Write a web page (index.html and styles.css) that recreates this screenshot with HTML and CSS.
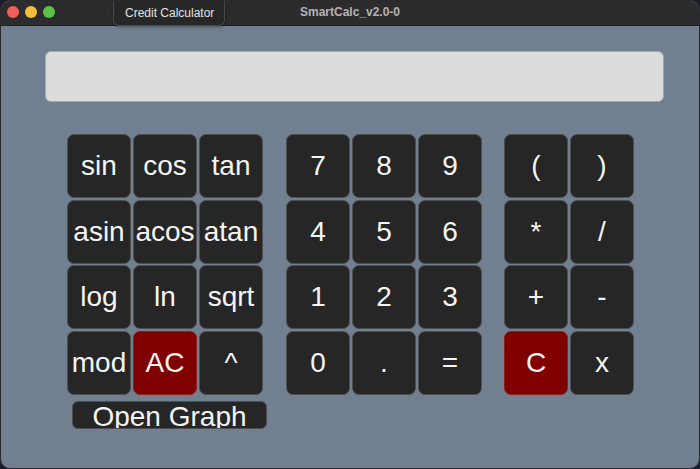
FILE: index.html
```html
<!DOCTYPE html>
<html>
<head>
<meta charset="utf-8">
<link rel="stylesheet" href="styles.css">
</head>
<body>
<div class="window">
  <div class="titlebar">
    <div class="lights">
      <span class="light red"></span>
      <span class="light yellow"></span>
      <span class="light green"></span>
    </div>
    <div class="title">SmartCalc_v2.0-0</div>
    <div class="tooltip">Credit Calculator</div>
  </div>
  <div class="content">
    <div class="display"></div>
    <div class="pads">
      <div class="col-left">
        <div class="grid g3">
          <button class="key">sin</button>
          <button class="key">cos</button>
          <button class="key">tan</button>
          <button class="key">asin</button>
          <button class="key">acos</button>
          <button class="key">atan</button>
          <button class="key">log</button>
          <button class="key">ln</button>
          <button class="key">sqrt</button>
          <button class="key">mod</button>
          <button class="key red-key">AC</button>
          <button class="key">^</button>
        </div>
        <button class="graph">Open Graph</button>
      </div>
      <div class="grid g3">
        <button class="key">7</button>
        <button class="key">8</button>
        <button class="key">9</button>
        <button class="key">4</button>
        <button class="key">5</button>
        <button class="key">6</button>
        <button class="key">1</button>
        <button class="key">2</button>
        <button class="key">3</button>
        <button class="key">0</button>
        <button class="key">.</button>
        <button class="key">=</button>
      </div>
      <div class="grid g2">
        <button class="key">(</button>
        <button class="key">)</button>
        <button class="key">*</button>
        <button class="key">/</button>
        <button class="key">+</button>
        <button class="key">-</button>
        <button class="key red-key">C</button>
        <button class="key">x</button>
      </div>
    </div>
  </div>
</div>
</body>
</html>
```
FILE: styles.css
```css
html, body {
  margin: 0;
  padding: 0;
  width: 700px;
  height: 469px;
  overflow: hidden;
  background: #1b1c2c;
}
body {
  font-family: "Liberation Sans", Arial, sans-serif;
}
.window {
  width: 700px;
  height: 469px;
  box-sizing: border-box;
  border-radius: 10px;
  overflow: hidden;
  background: #718090;
  border: 1px solid #2a2a2c;
  display: flex;
  flex-direction: column;
}
.titlebar {
  height: 24px;
  flex: none;
  background: #2c2c2e;
  border-bottom: 1px solid #1e1e1e;
  position: relative;
  display: flex;
  align-items: center;
  justify-content: center;
}
.lights {
  position: absolute;
  left: 6px;
  top: 5px;
  display: flex;
  gap: 6px;
}
.light {
  width: 12px;
  height: 12px;
  border-radius: 50%;
  display: block;
}
.red { background: #ed5f57; }
.yellow { background: #f5bd3c; }
.green { background: #5ac346; }
.title {
  color: #b3b3b3;
  font-weight: bold;
  font-size: 12px;
  margin-top: -2px;
}
.tooltip {
  position: absolute;
  left: 112px;
  top: -1px;
  width: 112px;
  height: 26px;
  box-sizing: border-box;
  background: #272728;
  border: 1px solid #4a4a4c;
  border-top: none;
  border-radius: 0 0 6px 6px;
  color: #e2e2e2;
  font-size: 12px;
  padding-left: 11px;
  line-height: 26px;
  box-shadow: 0 1px 3px rgba(0,0,0,0.4);
}
.content {
  flex: 1;
  padding: 25px 0 0 44px;
}
.display {
  width: 619px;
  height: 51px;
  box-sizing: border-box;
  background: #dcdcdc;
  border: 1px solid #a8a8a8;
  border-radius: 6px;
}
.pads {
  display: flex;
  align-items: flex-start;
  gap: 22px;
  margin-top: 32px;
  margin-left: 22px;
}
.col-left {
  width: 197px;
  flex: none;
  display: flex;
  flex-direction: column;
  gap: 6px;
}
.grid {
  display: grid;
  grid-auto-rows: 64px;
  column-gap: 2px;
  row-gap: 1.5px;
}
.g3 { grid-template-columns: repeat(3, 64px); }
.g2 { grid-template-columns: repeat(2, 64px); }
.key {
  margin: 0;
  padding: 0;
  background: #262626;
  border: 1px solid #4f4f4f;
  border-radius: 7px;
  color: #f4f4f4;
  font-family: "Liberation Sans", Arial, sans-serif;
  font-size: 28px;
  line-height: 1;
  display: flex;
  align-items: center;
  justify-content: center;
  overflow: hidden;
}
.red-key {
  background: #800000;
  border-color: #8a2020;
}
.graph {
  margin: 0 0 0 5px;
  padding: 0;
  width: 195px;
  height: 28px;
  background: #262626;
  border: 1px solid #4f4f4f;
  border-radius: 6px;
  color: #f4f4f4;
  font-family: "Liberation Sans", Arial, sans-serif;
  font-size: 28px;
  line-height: 30px;
  overflow: hidden;
}
```
